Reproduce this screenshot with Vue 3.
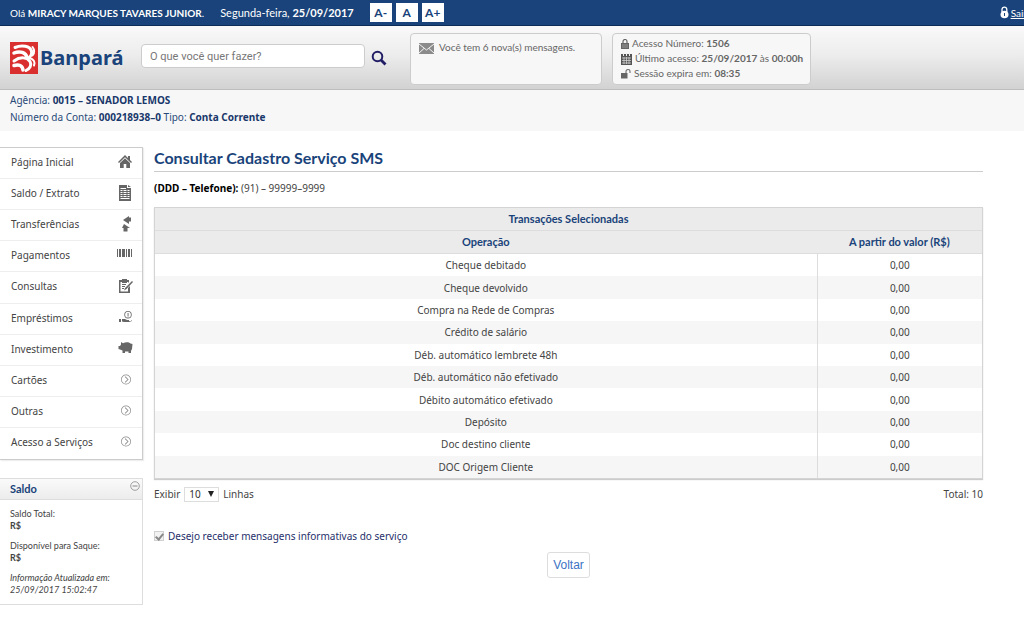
<script setup>
import { ref } from 'vue'

const search = ref('')
const pageSize = ref('10')
const informative = ref(true)

const arrow = 'M8 2.5a5 5 0 1 0 0 10a5 5 0 0 0 0-10zM8 3.2a4.3 4.3 0 1 1 0 8.600a4.300 4.300 0 0 1 0-8.600zM6.800 4.900L9.500 7.500L6.800 10.100L7.400 10.700L10.600 7.500L7.400 4.300z'

const menu = [
  { label: 'Página Inicial', icon: 'M8 1L1 8l1 1L8 3.300L14 9l1-1l-2-2V2h-2v2zM8 4.300L3 9v5h3.700v-4h2.600v4H13V9z' },
  { label: 'Saldo / Extrato', icon: 'M2 0h8v3h4v13H2zM3.500 3v1H9V3zM3.500 5v1h2V5zM6.500 5v1h3V5zM10.500 5v1h2V5zM3.500 7v1h2V7zM6.500 7v1h3V7zM10.500 7v1h2V7zM3.500 9v1h2V9zM6.500 9v1h3V9zM10.500 9v1h2V9zM3.500 11v1h2v-1zM6.500 11v1h3v-1zM10.500 11v1h2v-1zM3.500 13v1h9v-1zM11 0l3 2h-3z' },
  { label: 'Transferências', icon: 'M12 0v1.500h2v4h-2V8L6 4zM7 8l6 4h-2.500v3.500H6.500V12H5z' },
  { label: 'Pagamentos', icon: 'M0 2h1v8H0zM2 2h2v8H2zM5 2h3v8H5zM9 2h1v8H9zM11 2h2v8h-2zM14 2h1v8h-1z' },
  { label: 'Consultas', icon: 'M2 2h3V1h5v1h2v2l-1 1V4h-1v1H5V4H3.500v9.500h7.500V10l2-2v7H2zM5 6h4v1H5zM5 8h3v1H5zM5 10h2v1H5zM15 3l1 1l-6.500 7L7 12.500l1-2.500z' },
  { label: 'Empréstimos', icon: 'M11 1a3.700 3.700 0 1 0 0 7.400a3.700 3.700 0 0 0 0-7.400zM11 1.800a2.900 2.900 0 1 1 0 5.800a2.900 2.900 0 0 1 0-5.800zM10.600 3h.9v3.500h-.9zM2 9h2v3H2zM5 9h3l2 1h2v1h2l1-1v1l-3 1H7l-2-.5z' },
  { label: 'Investimento', icon: 'M4 1l2 1.200C9 .5 12 1 13.500 2.500L15.500 3L15 8C14.500 9 14 9.500 14 10.500V12h-2.500v-1.500H8V12H5.500v-2.500L3 8.500L1.500 8V5H3L4 3.500z' },
  { label: 'Cartões', icon: arrow, light: true },
  { label: 'Outras', icon: arrow, light: true },
  { label: 'Acesso a Serviços', icon: arrow, light: true }
]

const rows = [
  'Cheque debitado', 'Cheque devolvido', 'Compra na Rede de Compras', 'Crédito de salário',
  'Déb. automático lembrete 48h', 'Déb. automático não efetivado', 'Débito automático efetivado',
  'Depósito', 'Doc destino cliente', 'DOC Origem Cliente'
].map(name => ({ name, value: '0,00' }))
</script>

<template>
  <div class="page">
    <div class="topbar">
      <span class="user">Olá <b>MIRACY MARQUES TAVARES JUNIOR</b>.</span>
      <span class="date">Segunda-feira, <b>25/09/2017</b></span>
      <div class="sizes">
        <button type="button">A-</button>
        <button type="button">A</button>
        <button type="button">A+</button>
      </div>
      <a class="exit" href="#">
        <svg width="9" height="13" viewBox="0 0 9 13"><path d="M2 6V3.500a2.300 2.300 0 0 1 4.800 0V6" fill="none" stroke="#fff" stroke-width="1.300" /><ellipse cx="4.500" cy="8.500" rx="4" ry="3.800" fill="#fff" /><path d="M4 7h1v3H4z" fill="#19437a" /></svg>
        <span>Sair</span>
      </a>
    </div>

    <header class="header">
      <a class="logo" href="#" aria-label="Banpará">
        <svg width="28" height="32" viewBox="0 0 28 32">
          <path d="M0 0h28v32H0z" fill="#d9302f" />
          <g fill="none" stroke="#fff" stroke-linecap="round">
            <path d="M5 5.500C12 2.500 20 4 21.500 9c.8 3-1 5.500-3 7" stroke-width="3" />
            <path d="M4 11c6-2.500 12-.5 13 4.500" stroke-width="3.500" />
            <path d="M4 19c6-4.500 13-4 16 .5c2 3.500 0 7-4 9" stroke-width="3" />
            <path d="M4 23.500c5-1.500 8.500 0 9 4.500" stroke-width="3.500" />
            <path d="M19.500 16c4 1 6 4 4.500 7.500" stroke-width="2" />
            <path d="M22.500 5c2 2.500 2 6 0 8.500" stroke-width="2" />
          </g>
        </svg>
        <span>Banpará</span>
      </a>
      <form class="search" @submit.prevent>
        <input v-model="search" type="text" aria-label="O que você quer fazer?" placeholder="O que você quer fazer?">
        <button type="submit" aria-label="Buscar">
          <svg width="16" height="16" viewBox="0 0 16 16" fill="none" stroke="#211e66"><circle cx="6.500" cy="6.500" r="4.800" stroke-width="2" /><path d="M10 10l4.500 4.500" stroke-width="2.800" /></svg>
        </button>
      </form>
      <section class="panel messages">
        <svg width="15" height="11" viewBox="0 0 15 11"><path d="M0 0h15v11H0z" fill="#8b8b8b" /><path d="M0 1l7.500 6L15 1M0 10l5-4.500M15 10l-5-4.500" fill="none" stroke="#f4f4f4" /></svg>
        <span>Você tem 6 nova(s) mensagens.</span>
      </section>
      <section class="panel session">
        <div>
          <svg width="8" height="10" viewBox="0 0 8 10"><path d="M2 5V2.500a2 2 0 0 1 4 0V5" fill="none" stroke="#666" stroke-width="1.200" /><path d="M0 4h8v6H0z" fill="#666" /><path d="M1 6h6M1 8h6" stroke="#999" /></svg>
          <span>Acesso Número: <b>1506</b></span>
        </div>
        <div>
          <svg width="11" height="12" viewBox="0 0 11 12"><path d="M0 1h11v11H0z" fill="#555" /><path d="M1 5h9M1 7.500h9M1 10h9M3 4v7M5.500 4v7M8 4v7" stroke="#ddd" stroke-width=".7" /><path d="M2.500 0v3M5.500 0v3M8.500 0v3" stroke="#eee" /></svg>
          <span>Último acesso: <b>25/09/2017</b> às <b>00:00h</b></span>
        </div>
        <div>
          <svg width="10" height="10" viewBox="0 0 10 10"><path d="M5 5V2.500a2 2 0 0 1 4 0V4" fill="none" stroke="#777" stroke-width="1.200" /><path d="M0 4h6.500v5.500H0z" fill="#666" /></svg>
          <span>Sessão expira em: <b>08:35</b></span>
        </div>
      </section>
    </header>

    <div class="account">
      <div>Agência: <b>0015 – SENADOR LEMOS</b></div>
      <div>Número da Conta: <b>000218938–0</b> Tipo: <b>Conta Corrente</b></div>
    </div>

    <div class="body">
      <aside>
        <nav class="menu">
          <a v-for="item in menu" :key="item.label" href="#">
            <span>{{ item.label }}</span>
            <svg :class="{ light: item.light }" width="16" height="16" viewBox="0 0 16 16"><path :d="item.icon" fill-rule="evenodd" /></svg>
          </a>
        </nav>
        <section class="balance">
          <div class="balance-head">
            <h2>Saldo</h2>
            <button type="button" aria-label="Recolher saldo">
              <svg width="10" height="10" viewBox="0 0 10 10" fill="none" stroke="#888"><circle cx="5" cy="5" r="4.300" stroke-width=".8" /><path d="M2.500 5h5" /></svg>
            </button>
          </div>
          <div class="balance-body">
            <p>Saldo Total:<br><b>R$</b></p>
            <p>Disponível para Saque:<br><b>R$</b></p>
            <p class="updated">Informação Atualizada em:<br>25/09/2017 15:02:47</p>
          </div>
        </section>
      </aside>

      <main>
        <h1>Consultar Cadastro Serviço SMS</h1>
        <p class="phone"><b>(DDD – Telefone):</b> (91) – 99999–9999</p>
        <table>
          <thead>
            <tr><th colspan="2">Transações Selecionadas</th></tr>
            <tr><th class="name">Operação</th><th>A partir do valor (R$)</th></tr>
          </thead>
          <tbody>
            <tr v-for="row in rows" :key="row.name"><td>{{ row.name }}</td><td>{{ row.value }}</td></tr>
          </tbody>
        </table>
        <div class="paging">
          <label for="size">Exibir</label>
          <span class="select">
            <select id="size" v-model="pageSize"><option>10</option><option>20</option><option>50</option></select>
            <svg width="6" height="6" viewBox="0 0 6 6"><path d="M0 0h6L3 6z" fill="#222" /></svg>
          </span>
          <span>Linhas</span>
          <span class="total">Total: 10</span>
        </div>
        <label class="check"><input v-model="informative" type="checkbox" disabled><span>Desejo receber mensagens informativas do serviço</span></label>
        <div class="actions"><button type="button">Voltar</button></div>
      </main>
    </div>
  </div>
</template>

<style>
body { margin: 0; background: #fff; }
</style>

<style scoped>
* { box-sizing: border-box; }
.page { overflow: hidden; font: 10px/16px "Noto Sans", sans-serif; color: #444; }
button { cursor: pointer; }
a { color: inherit; text-decoration: none; }
svg { flex: none; display: block; }
.topbar { display: flex; align-items: center; height: 26px; padding-left: 10px; color: #fff; background: #19437a; border-bottom: 1px solid #0d2c57; white-space: nowrap; font-family: Lato, sans-serif; }
.date { margin-left: 16px; font-size: 11px; }
.sizes { display: flex; gap: 4px; margin-left: 16px; }
.sizes button { width: 22px; height: 19px; padding: 0; border: 0; background: #fff; color: #19437a; font: bold 12px/18px Lato, sans-serif; }
.exit { display: flex; align-items: center; gap: 2px; margin: 0 -3px 0 auto; }
.exit span { text-decoration: underline; }
.header { display: flex; height: 64px; padding-left: 10px; background: linear-gradient(#f9f9f9, #ededed 45%, #d2d2d2); border-bottom: 1px solid #bdbdbd; }
.logo { display: flex; align-items: center; gap: 2px; width: 131px; color: #19437a; font: bold 20px/30px "Noto Sans", sans-serif; }
.search { display: flex; align-items: flex-start; gap: 6px; padding-top: 18px; }
.search input { width: 224px; height: 24px; padding: 0 8px; border: 1px solid #ccc; border-radius: 4px; background: #fff; font: 11px Roboto, sans-serif; color: #555; }
.search input::placeholder { color: #777; opacity: 1; }
.search button { padding: 6px 0 0; border: 0; background: none; }
.panel { height: 52px; margin-top: 7px; border: 1px solid #ccc; border-radius: 4px; background: #f7f7f7; color: #666; font: 10px/15px Lato, sans-serif; white-space: nowrap; }
.messages { display: flex; gap: 5px; width: 192px; margin-left: 23px; padding: 6px 8px; }
.messages svg { margin-top: 3px; }
.session { width: 199px; margin-left: 10px; padding: 2px 8px; }
.session div { display: flex; align-items: center; gap: 3px; }
.account { height: 41px; padding: 2px 10px; background: #f7f7f7; color: #294a79; line-height: 17px; }
.account b { color: #19376b; }
.body { display: flex; align-items: flex-start; gap: 11px; padding: 16px 41px 18px 0; }
aside { flex: none; width: 143px; }
.menu { display: grid; grid-auto-rows: 1fr; min-height: 313px; border: 1px solid #ccc; border-width: 1px 1px 1px 0; box-shadow: 1px 1px 1px #eee; }
.menu a { display: flex; align-items: center; justify-content: space-between; padding: 0 9px 2px 11px; border-bottom: 1px solid #eee; }
.menu a:last-child { border-bottom: 0; }
.menu svg { fill: #666; }
.menu svg.light { margin-right: -1px; fill: #8a8a8a; }
.balance { margin-top: 18px; border: 1px solid #ddd; border-left: 0; }
.balance-head { display: flex; justify-content: space-between; height: 21px; padding: 0 2px 0 10px; background: linear-gradient(#fafafa, #ececec); border-bottom: 1px solid #ddd; }
h2 { margin: 0; font: bold 11px/20px Lato, sans-serif; color: #19437a; }
.balance-head button { height: 14px; padding: 2px 0; border: 0; background: none; }
.balance-body { padding: 8px 10px; font: 9px/12px Lato, sans-serif; white-space: nowrap; }
.balance-body p { margin: 0 0 8px; }
.balance-body .updated { margin: 0; font-style: italic; }
main { flex: 1; min-width: 0; }
h1 { margin: 0; padding-bottom: 2px; border-bottom: 1px solid #ccc; color: #19437a; font: bold 16px/22px Lato, sans-serif; }
.phone { margin: 8px 0 11px; }
.phone b { color: #000; }
table { width: 100%; height: 272px; border: 1px solid #d4d4d4; border-collapse: separate; border-spacing: 0; box-shadow: 0 1px 1px #ccc; text-align: center; }
th { height: 23px; padding: 0; background: #ebebeb; border-bottom: 1px solid #ddd; color: #19437a; font: bold 11px/16px Lato, sans-serif; }
.name { width: 80%; }
td { padding: 0; }
td + td { border-left: 1px solid #ddd; }
tbody tr:nth-child(even) { background: #f6f6f6; }
.paging { display: flex; align-items: center; gap: 4px; height: 16px; margin-top: 7px; }
.select { display: grid; grid-template-columns: 1fr 10px; align-items: center; width: 35px; height: 15px; border: 1px solid #ddd; }
.select select { grid-area: 1 / 1 / 2 / 3; width: 100%; height: 13px; padding: 0 4px; border: 0; appearance: none; background: transparent; color: #333; font: 10px/13px "Noto Sans", sans-serif; }
.select svg { grid-area: 1 / 2; pointer-events: none; }
.total { margin-left: auto; }
.check { display: flex; align-items: center; gap: 4px; width: max-content; margin-top: 26px; color: #26306b; }
.check input { appearance: none; width: 10px; height: 10px; margin: 0; border: 1px solid #d0d0d0; background: #f2f2f2; }
.check input:checked::after { content: ""; display: block; width: 3px; height: 6px; margin: 0 0 0 2px; border: solid #888; border-width: 0 2px 2px 0; rotate: 40deg; }
.actions { display: flex; justify-content: center; margin-top: 8px; }
.actions button { height: 26px; padding: 0 5px; border: 1px solid #ddd; border-radius: 3px; background: #fff; color: #3b73c4; font: 12px "Liberation Sans", sans-serif; }
</style>
